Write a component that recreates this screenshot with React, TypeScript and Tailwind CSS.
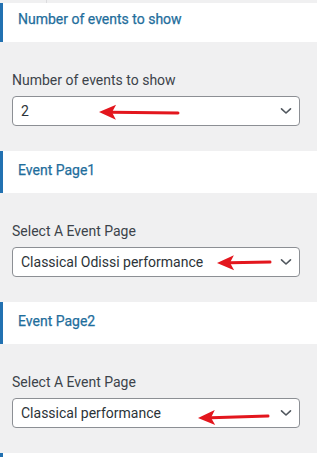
import React from "react";

type Arrow = { tip: [number, number]; tail: [number, number] };

function RedArrow({ tip, tail }: Arrow) {
  const [tx, ty] = tip;
  const [sx, sy] = tail;
  const dx = sx - tx;
  const dy = sy - ty;
  const len = Math.sqrt(dx * dx + dy * dy);
  const ux = dx / len;
  const uy = dy / len;
  const px = -uy;
  const py = ux;
  const headLen = 17;
  const headHalf = 7.5;
  const notch = 13;
  const b1x = tx + ux * headLen + px * headHalf;
  const b1y = ty + uy * headLen + py * headHalf;
  const b2x = tx + ux * headLen - px * headHalf;
  const b2y = ty + uy * headLen - py * headHalf;
  const nx = tx + ux * notch;
  const ny = ty + uy * notch;
  return (
    <g>
      <line x1={nx} y1={ny} x2={sx} y2={sy} stroke="#e3161d" strokeWidth={3} strokeLinecap="round" />
      <polygon points={`${tx},${ty} ${b1x},${b1y} ${nx},${ny} ${b2x},${b2y}`} fill="#e3161d" />
    </g>
  );
}

function Header({ title, first }: { title: string; first?: boolean }) {
  return (
    <div
      className={
        "bg-white border-l-[3px] border-[#2271b1] pl-[15px] flex items-start " +
        (first ? "h-[39px] pt-[6px]" : "h-[42px] pt-[9px]")
      }
    >
      <span className="text-[14px] leading-[20px] text-[#1f6e9c] [-webkit-text-stroke:0.25px_#1f6e9c]">{title}</span>
    </div>
  );
}

function Field({ label, value, arrow }: { label: string; value: string; arrow: Arrow }) {
  return (
    <div className="pt-[28px] pb-[25px] pl-[12px] pr-[17px]">
      <div className="text-[14px] leading-[20px] text-[#3c434a] mb-[6px]">{label}</div>
      <div className="relative h-[30px] bg-white border border-[#8c8f94] rounded-[4px] flex items-center pl-[8px]">
        <span className="text-[14px] leading-[20px] text-[#2c3338]">{value}</span>
        <svg
          className="absolute right-[7px] top-1/2 -translate-y-1/2"
          width="12"
          height="8"
          viewBox="0 0 12 8"
        >
          <path d="M1.5 1.8 L6 6 L10.5 1.8" fill="none" stroke="#50575e" strokeWidth="1.6" strokeLinecap="round" strokeLinejoin="round" />
        </svg>
        <svg className="absolute left-0 top-0 overflow-visible pointer-events-none" width="288" height="30">
          <RedArrow tip={arrow.tip} tail={arrow.tail} />
        </svg>
      </div>
    </div>
  );
}

export default function App() {
  return (
    <div
      className="w-[317px] h-[457px] overflow-hidden bg-[#f0f0f1]"
      style={{ fontFamily: "Roboto, 'Liberation Sans', sans-serif" }}
    >
      <div className="h-[3px] flex">
        <div className="ml-[46px] w-px h-full bg-[#dcdcde]" />
      </div>
      <Header title="Number of events to show" first />
      <Field label="Number of events to show" value="2" arrow={{ tip: [86, 15], tail: [165, 16] }} />
      <Header title="Event Page1" />
      <Field label="Select A Event Page" value="Classical Odissi performance" arrow={{ tip: [204, 15], tail: [257, 14] }} />
      <Header title="Event Page2" />
      <Field label="Select A Event Page" value="Classical performance" arrow={{ tip: [185, 19], tail: [255, 17] }} />
      <Header title="" />
    </div>
  );
}
